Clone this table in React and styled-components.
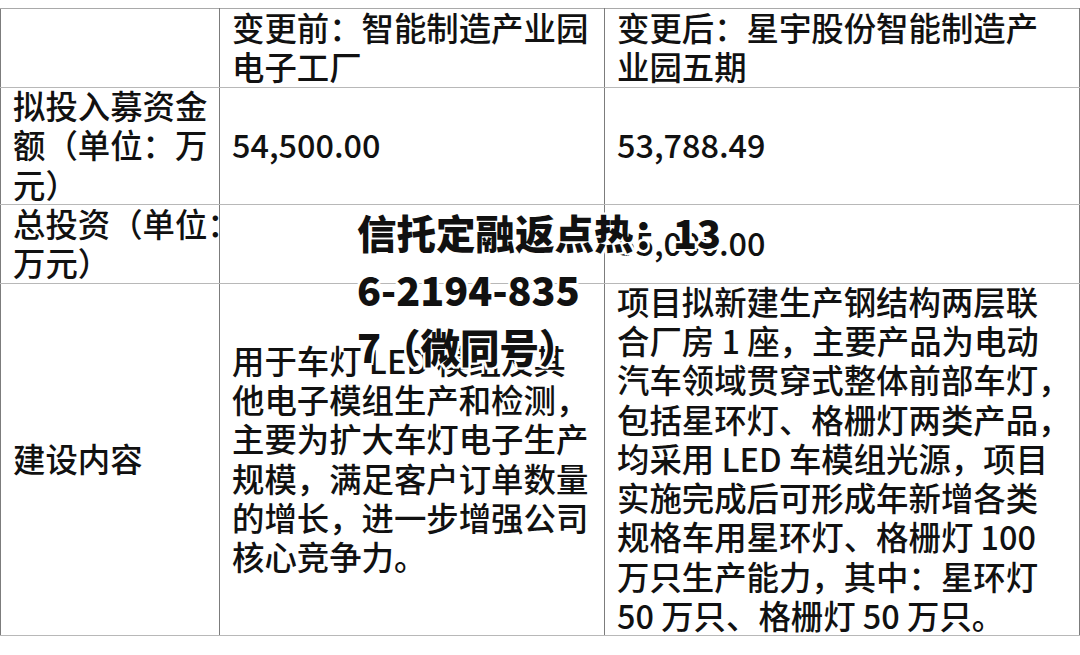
import React from 'react';
import styled, { createGlobalStyle } from 'styled-components';

const GlobalStyle = createGlobalStyle`
    html, body {
        margin:0;
        padding:0;
        background:#fff;
    }
    body {
        overflow:hidden;
    }
`

const Page = styled.div`
    position:relative;
    width:1080px;
    height:655px;
    padding-top:8px;
    box-sizing:border-box;
    font-family:"Noto Sans CJK SC", "Noto Sans", sans-serif;
    color:#111;
`

const Table = styled.table`
    border-collapse:collapse;
    table-layout:fixed;
    width:1079px;
`

const Col = styled.col`
    width:${props => props.$w}px;
`

const Row = styled.tr`
    height:${props => props.$h}px;
`

const Cell = styled.td`
    padding:0 12px;
    font-size:32.4px;
    font-weight:500;
    line-height:39.2px;
    vertical-align:middle;
    white-space:nowrap;
    border-top:1px solid #a9a9a9;
    border-bottom:1px solid #b8b8b8;
    border-left:1px solid #7c7c7c;
    border-right:1px solid #7c7c7c;
`

// the glyphs sit a little high in their lines in the original
const CellText = styled.div`
    margin-top:-4px;
`

const Watermark = styled.div`
    position:absolute;
    left:357px;
    top:203px;
    font-size:39.5px;
    line-height:57px;
    font-weight:900;
    color:#111;
    white-space:nowrap;
    text-shadow:
        2px 0 0 #fff, -2px 0 0 #fff, 0 2px 0 #fff, 0 -2px 0 #fff,
        2px 2px 0 #fff, -2px -2px 0 #fff, 2px -2px 0 #fff, -2px 2px 0 #fff;
`

const WatermarkLine = styled.div``

function Lines({ items }) {
    return items.map((line, i) => (
        <React.Fragment key={i}>
            {i > 0 && <br />}
            {line}
        </React.Fragment>
    ))
}

const rows = [
    {
        h: 79,
        cells: [
            [],
            ['变更前：智能制造产业园', '电子工厂'],
            ['变更后：星宇股份智能制造产', '业园五期'],
        ],
    },
    {
        h: 117,
        cells: [
            ['拟投入募资金', '额（单位：万', '元）'],
            ['54,500.00'],
            ['53,788.49'],
        ],
    },
    {
        h: 79,
        cells: [
            ['总投资（单位：', '万元）'],
            [],
            ['55,000.00'],
        ],
    },
    {
        h: 352,
        cells: [
            ['建设内容'],
            [
                '用于车灯 LED 模组及其',
                '他电子模组生产和检测，',
                '主要为扩大车灯电子生产',
                '规模，满足客户订单数量',
                '的增长，进一步增强公司',
                '核心竞争力。',
            ],
            [
                '项目拟新建生产钢结构两层联',
                '合厂房 1 座，主要产品为电动',
                '汽车领域贯穿式整体前部车灯，',
                '包括星环灯、格栅灯两类产品，',
                '均采用 LED 车模组光源，项目',
                '实施完成后可形成年新增各类',
                '规格车用星环灯、格栅灯 100',
                '万只生产能力，其中：星环灯',
                '50 万只、格栅灯 50 万只。',
            ],
        ],
    },
]

export default function App() {
    return (
        <>
            <GlobalStyle />
            <Page>
                <Table>
                    <colgroup>
                        <Col $w={219} />
                        <Col $w={385} />
                        <Col $w={475} />
                    </colgroup>
                    <tbody>
                        {rows.map((row, r) => (
                            <Row key={r} $h={row.h}>
                                {row.cells.map((lines, c) => (
                                    <Cell key={c}>
                                        <CellText>
                                            <Lines items={lines} />
                                        </CellText>
                                    </Cell>
                                ))}
                            </Row>
                        ))}
                    </tbody>
                </Table>
                <Watermark>
                    <WatermarkLine>信托定融返点热：13</WatermarkLine>
                    <WatermarkLine>6-2194-835</WatermarkLine>
                    <WatermarkLine>7（微同号）</WatermarkLine>
                </Watermark>
            </Page>
        </>
    )
}
